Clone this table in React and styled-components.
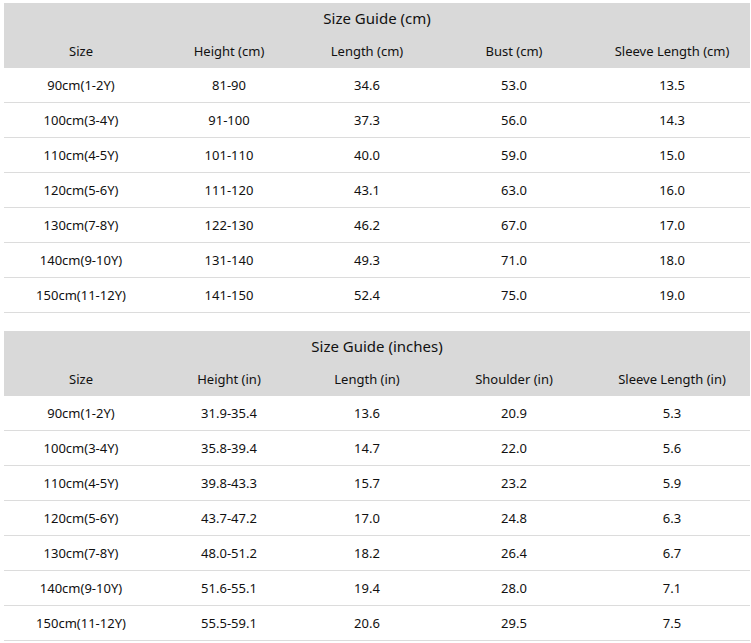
import React from 'react'
import styled, { createGlobalStyle } from 'styled-components'

const GlobalStyle = createGlobalStyle`
    body {
        margin: 0;
        background: #fff;
        font-family: "Noto Sans", "Open Sans", sans-serif;
        color: #111;
    }
`;

const widths = [154, 142, 134, 160, 156]

const cmRows = [
    ['90cm(1-2Y)', '81-90', '34.6', '53.0', '13.5'],
    ['100cm(3-4Y)', '91-100', '37.3', '56.0', '14.3'],
    ['110cm(4-5Y)', '101-110', '40.0', '59.0', '15.0'],
    ['120cm(5-6Y)', '111-120', '43.1', '63.0', '16.0'],
    ['130cm(7-8Y)', '122-130', '46.2', '67.0', '17.0'],
    ['140cm(9-10Y)', '131-140', '49.3', '71.0', '18.0'],
    ['150cm(11-12Y)', '141-150', '52.4', '75.0', '19.0'],
]

const inRows = [
    ['90cm(1-2Y)', '31.9-35.4', '13.6', '20.9', '5.3'],
    ['100cm(3-4Y)', '35.8-39.4', '14.7', '22.0', '5.6'],
    ['110cm(4-5Y)', '39.8-43.3', '15.7', '23.2', '5.9'],
    ['120cm(5-6Y)', '43.7-47.2', '17.0', '24.8', '6.3'],
    ['130cm(7-8Y)', '48.0-51.2', '18.2', '26.4', '6.7'],
    ['140cm(9-10Y)', '51.6-55.1', '19.4', '28.0', '7.1'],
    ['150cm(11-12Y)', '55.5-59.1', '20.6', '29.5', '7.5'],
]

const SizeTable = ({ title, columns, rows }) => (
    <STable>
        <colgroup>
            {widths.map((w, i) => <col key={i} style={{ width: w }} />)}
        </colgroup>
        <thead>
            <tr>
                <STitle colSpan={5}>{title}</STitle>
            </tr>
            <tr>
                {columns.map(c => <SHead key={c}>{c}</SHead>)}
            </tr>
        </thead>
        <tbody>
            {rows.map(r => (
                <SRow key={r[0]}>
                    {r.map((v, i) => <SCell key={i}>{v}</SCell>)}
                </SRow>
            ))}
        </tbody>
    </STable>
)

const App = () => (
    <SPage>
        <GlobalStyle />
        <SizeTable
            title="Size Guide (cm)"
            columns={['Size', 'Height (cm)', 'Length (cm)', 'Bust (cm)', 'Sleeve Length (cm)']}
            rows={cmRows}
        />
        <SizeTable
            title="Size Guide (inches)"
            columns={['Size', 'Height (in)', 'Length (in)', 'Shoulder (in)', 'Sleeve Length (in)']}
            rows={inRows}
        />
    </SPage>
)

export default App

const SPage = styled.div`
    display: flex;
    flex-direction: column;
    gap: 18px;
    padding: 3px 1px 0 4px;
`;

const STable = styled.table`
    width: 746px;
    border-collapse: collapse;
    table-layout: fixed;
    font-size: 13px;
`;

const STitle = styled.th`
    background: #d9d9d9;
    height: 30px;
    padding: 0;
    font-size: 15px;
    font-weight: normal;
    text-align: center;
    vertical-align: middle;
`;

const SHead = styled.th`
    background: #d9d9d9;
    height: 35px;
    padding: 0;
    font-weight: normal;
    text-align: center;
    vertical-align: middle;
`;

const SRow = styled.tr`
    border-bottom: 1px solid #dcdcdc;
`;

const SCell = styled.td`
    height: 34px;
    padding: 0;
    text-align: center;
    vertical-align: middle;
`;
